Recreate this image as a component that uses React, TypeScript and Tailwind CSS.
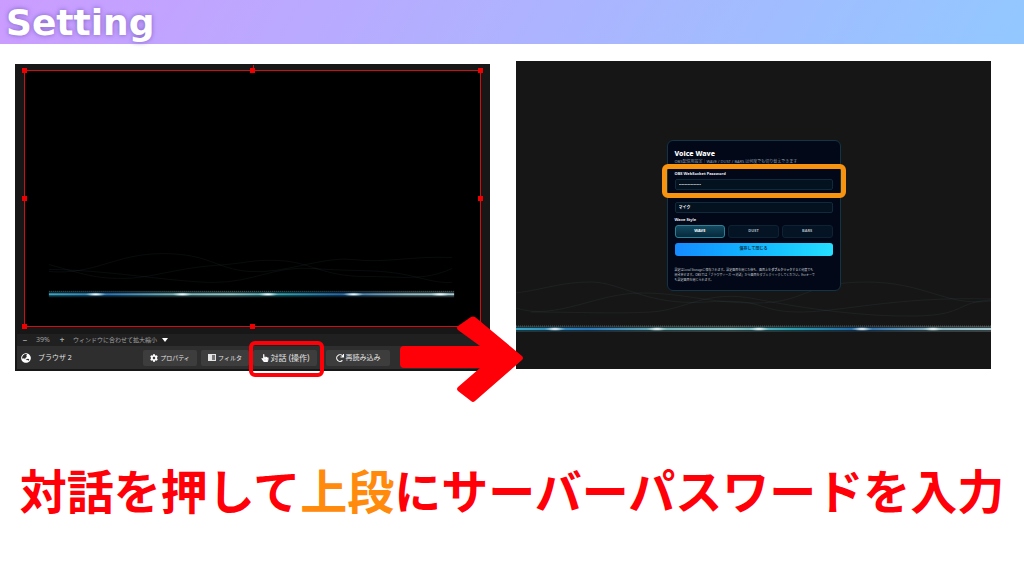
import { FaCog, FaGlobeAsia, FaHandPointer, FaRedo } from "react-icons/fa";

type WaveLineProps = {
  id: string;
  width: number;
  height: number;
  x1: number;
  x2: number;
  y: number;
  sparks: number[];
  waves: string[];
};

const WaveLine = ({ id, width, height, x1, x2, y, sparks, waves }: WaveLineProps) => (
  <svg
    className="absolute inset-0 h-full w-full"
    viewBox={`0 0 ${width} ${height}`}
    preserveAspectRatio="none"
    fill="none"
    aria-hidden="true"
  >
    <defs>
      <linearGradient id={`${id}-line`} gradientUnits="userSpaceOnUse" x1={x1} y1={y} x2={x2} y2={y}>
        <stop offset="0" stopColor="#3aa6c4" />
        <stop offset="0.15" stopColor="#2a78b8" />
        <stop offset="0.3" stopColor="#6fb0b8" />
        <stop offset="0.45" stopColor="#8fc8cc" />
        <stop offset="0.58" stopColor="#2d9fb0" />
        <stop offset="0.72" stopColor="#2468a8" />
        <stop offset="0.88" stopColor="#8cb8c4" />
        <stop offset="1" stopColor="#a8cdd6" />
      </linearGradient>
      <radialGradient id={`${id}-spark`}>
        <stop offset="0" stopColor="#fff" />
        <stop offset="0.3" stopColor="#e8f4f8" stopOpacity="0.8" />
        <stop offset="1" stopColor="#9cc" stopOpacity="0" />
      </radialGradient>
    </defs>
    {waves.map((d) => (
      <path key={d} d={d} stroke="#6fa3b5" strokeOpacity="0.08" />
    ))}
    <path d={`M${x1} ${y - 3}H${x2}`} stroke="#9fb4b0" strokeOpacity="0.4" strokeDasharray="1 1" />
    <rect x={x1} y={y - 3} width={x2 - x1} height="6" fill={`url(#${id}-line)`} fillOpacity="0.25" />
    <rect x={x1} y={y - 1} width={x2 - x1} height="2" fill={`url(#${id}-line)`} />
    {sparks.map((x) => (
      <ellipse key={x} cx={x} cy={y} rx="11" ry="2" fill={`url(#${id}-spark)`} />
    ))}
  </svg>
);

const handles = [
  "-left-[3px] -top-[3px]",
  "left-1/2 -ml-[3px] -top-[3px]",
  "-right-[3px] -top-[3px]",
  "-left-[3px] top-1/2 -mt-[3px]",
  "-right-[3px] top-1/2 -mt-[3px]",
  "-left-[3px] -bottom-[3px]",
  "left-1/2 -ml-[3px] -bottom-[3px]",
  "-right-[3px] -bottom-[3px]",
];

const toolButton = "flex h-4 items-center justify-center gap-[2px] rounded-[2px] bg-[#3d3d3d] whitespace-nowrap";

const ObsPreview = () => (
  <section className="mt-[3px] min-w-0 flex-1 bg-[#171717] pt-[6px] pb-[2px] text-[#d8d8d8]">
    <div className="relative mx-[9px] aspect-video border border-[#d01010] bg-black">
      <WaveLine
        id="obs"
        width={457}
        height={257}
        x1={24}
        x2={431}
        y={225}
        sparks={[71, 158, 244, 330, 417]}
        waves={[
          "M24 195C60 205 70 209 98 209S150 199 190 196 225 190 255 191 300 207 340 207 400 212 429 199",
          "M24 202C70 206 90 184 138 184S190 199 225 202 300 186 330 190 390 186 429 188",
          "M24 200C80 200 150 213 190 213S250 196 290 199 350 200 375 204 410 214 429 213",
        ]}
      />
      <span className="absolute bottom-full left-1/2 h-[6px] w-px bg-[#d01010]" />
      {handles.map((place) => (
        <span key={place} className={`absolute h-[5px] w-[5px] bg-[#f00000] ${place}`} />
      ))}
    </div>

    <div className="mt-[7px] ml-[2px] flex h-3 items-center bg-[#202020] pl-[5px] text-[6px] leading-3 text-[#a0a0a0]">
      <button type="button" aria-label="縮小" className="w-[6px] text-[8px] font-bold">−</button>
      <span className="ml-[8px] w-[20px] text-[7px]">39%</span>
      <button type="button" aria-label="拡大" className="ml-[2px] w-[8px] text-[8px] font-bold">+</button>
      <div className="relative ml-[7px] flex h-3 w-[104px] items-center">
        <select aria-label="プレビューの拡大率" className="h-3 w-full appearance-none bg-transparent outline-none">
          <option>ウィンドウに合わせて拡大縮小</option>
        </select>
        <svg className="pointer-events-none absolute right-[9px] h-[4px] w-[6px]" viewBox="0 0 6 4" fill="#fff">
          <path d="M0 0H6L3 4Z" />
        </svg>
      </div>
    </div>

    <div className="ml-[2px] flex h-[23px] items-center bg-[#2e2e2e] pl-1 text-[7px] leading-4 text-[#e4e4e4]">
      <FaGlobeAsia size={10} color="#fff" />
      <span className="ml-[7px] w-[105px] whitespace-nowrap">ブラウザ 2</span>
      <button type="button" className={`${toolButton} w-[54px] text-[6px]`}>
        <FaCog size={8} color="#fff" />
        プロパティ
      </button>
      <button type="button" className={`${toolButton} ml-1 w-[48px] text-[6px]`}>
        <svg className="h-[7px] w-[8px]" viewBox="0 0 8 7" fill="none">
          <rect x="0.5" y="0.5" width="7" height="6" stroke="#e4e4e4" />
          <rect x="1" y="1" width="3" height="5" fill="#e4e4e4" />
          <rect x="4" y="1" width="3" height="5" fill="#777" />
        </svg>
        フィルタ
      </button>
      <div className="relative ml-1">
        <button type="button" className={`${toolButton} w-[64px] text-[8px]`}>
          <FaHandPointer size={8} color="#fff" />
          対話 (操作)
        </button>
        <span className="pointer-events-none absolute -top-[9px] -right-[7px] -bottom-[11px] -left-1 rounded-md border-4 border-[#ff0008]" />
      </div>
      <button type="button" className={`${toolButton} ml-[9px] w-[64px] text-[7px]`}>
        <FaRedo size={8} color="#fff" />
        再読み込み
      </button>
    </div>
  </section>
);

const styleButton = "h-[13px] flex-1 rounded-[3px] border text-[4px] font-bold";
const field = "block h-[11px] w-full rounded-[2px] border border-[#0f2a3a] bg-[#04111f] px-[3px] text-[4px] text-[#e8eef4] outline-none";

const VoiceWavePanel = () => (
  <section className="relative flex aspect-[475/308] min-w-0 flex-1 items-center justify-center bg-[#161616]">
    <WaveLine
      id="voice"
      width={475}
      height={308}
      x1={0}
      x2={475}
      y={268}
      sparks={[39, 141, 243, 346, 417]}
      waves={[
        "M0 232C30 228 45 221 75 221S130 245 190 241 240 250 280 251 380 235 475 238",
        "M0 247C40 260 80 232 125 232S190 242 240 242 290 221 350 221 430 246 475 240",
        "M15 251C60 251 100 253 135 251S190 228 240 238 350 256 400 255 440 241 475 239",
      ]}
    />
    <form
      className="relative w-[174px] rounded-[6px] border border-[#123447] bg-[#020817] px-[7px] pt-[7px] pb-[7px] text-[4px] leading-[4px] text-[#e8eef4]"
      onSubmit={(e) => e.preventDefault()}
    >
      <h2 className="text-[7px] leading-3 font-extrabold text-white">Voice Wave</h2>
      <p className="whitespace-nowrap text-[#8b98a6]">OBS配信用設定｜WAVE / DUST / BARS は何度でも切り替えできます</p>
      <div className="relative mt-2">
        <label htmlFor="password" className="block font-bold">OBS WebSocket Password</label>
        <input id="password" type="password" defaultValue="voicewavesecret" className={`${field} mt-[3px]`} />
        <span className="pointer-events-none absolute -inset-x-[13px] -top-2 -bottom-2 rounded-md border-[5px] border-[#f8930f]" />
      </div>
      <input aria-label="マイク" defaultValue="マイク" className={`${field} mt-3 font-bold`} />
      <p className="mt-[5px] font-bold">Wave Style</p>
      <div className="mt-[3px] flex gap-[3px]">
        <button type="button" className={`${styleButton} border-[#2a8296] bg-linear-to-b from-[#124b60] to-[#08283c] text-white`}>WAVE</button>
        <button type="button" className={`${styleButton} border-[#0d2232] bg-[#051424] text-[#aab4be]`}>DUST</button>
        <button type="button" className={`${styleButton} border-[#0d2232] bg-[#051424] text-[#aab4be]`}>BARS</button>
      </div>
      <button type="submit" className="mt-[5px] block h-[13px] w-full rounded-[3px] bg-linear-to-r from-[#168bff] to-[#25dfff] font-bold text-[#06334c]">
        保存して閉じる
      </button>
      <p className="mt-3 text-[3px] leading-[5px] whitespace-nowrap text-[#c2cad2]">
        設定はLocal Storageに保存されます。設定画面を閉じた後も、画面上を<b>ダブルクリック</b>すると何度でも
        <br />
        開き直せます。OBSでは「ブラウザソース → 対話」から画面をダブルクリックしてください。Escキーで
        <br />
        も設定画面を閉じられます。
      </p>
    </form>
  </section>
);

const App = () => {
  return (
    <div className="min-h-screen bg-white font-['Noto_Sans','Noto_Sans_CJK_JP',sans-serif]">
      <header className="h-11 bg-linear-[120deg] from-[#cb9cff] to-[#92c8ff] pl-[6px]">
        <h1 className="font-['DejaVu_Sans',sans-serif] text-[36px] leading-[46px] font-bold text-white [text-shadow:0_0_5px_#8060c8]">
          Setting
        </h1>
      </header>

      <main>
        <div className="relative flex items-start gap-[26px] pt-[17px] pr-[33px] pl-[15px]">
          <ObsPreview />
          <VoiceWavePanel />
          <svg
            className="absolute top-[272px] left-1/2 -ml-[112px] h-[86px] w-[123px]"
            viewBox="0 0 123 86"
            fill="#ff0008"
            aria-hidden="true"
          >
            <path d="M4 30H80L58 14Q56 12 58 10L71 1Q73 0 75 1L122 40Q124 42 122 44L75 85Q73 87 71 85L58 75Q56 73 58 71L80 52H4Q0 52 0 48V34Q0 30 4 30Z" />
          </svg>
        </div>

        <p className="mt-[85px] text-center text-[47px] leading-[70px] font-bold whitespace-nowrap text-[#ff0008]">
          対話を押して<span className="text-[#ff8a0c]">上段</span>にサーバーパスワードを入力
        </p>
      </main>
    </div>
  );
};

export default App;
